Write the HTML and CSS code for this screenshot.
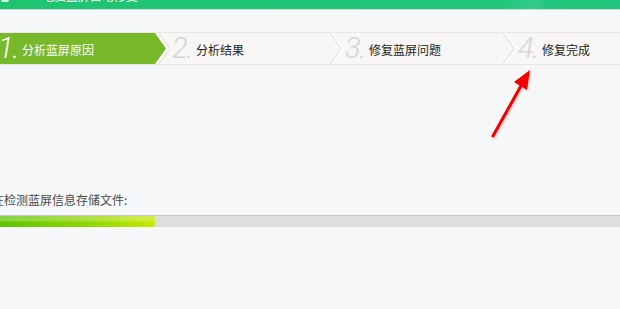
FILE: index.html
```html
<!DOCTYPE html>
<html lang="zh-CN">
<head>
    <meta charset="UTF-8">
    <title>蓝屏修复</title>
    <link rel="stylesheet" href="styles.css">
</head>
<body>
    <div class="window">
        <div class="titlebar">
            <span class="title-icon"></span>
            <span class="title-text">— 电脑蓝屏自动修复</span>
        </div>

        <div class="steps">
            <div class="step step-active">
                <div class="step-main">
                    <span class="step-num">1.</span>
                    <span class="step-label">分析蓝屏原因</span>
                </div>
                <svg class="step-sep" width="18" height="31" viewBox="0 0 18 31">
                    <polygon points="0,0 1,0 12,15.5 1,31 0,31" fill="#78b92b"/>
                    <polyline points="3,0 14,15.5 3,31" fill="none" stroke="#ffffff" stroke-width="1.5"/>
                    <polyline points="5,0 16,15.5 5,31" fill="none" stroke="#dcdcdc" stroke-width="1"/>
                </svg>
            </div>
            <div class="step">
                <div class="step-main">
                    <span class="step-num">2.</span>
                    <span class="step-label">分析结果</span>
                </div>
                <svg class="step-sep" width="18" height="31" viewBox="0 0 18 31">
                    <polyline points="3,0 14,15.5 3,31" fill="none" stroke="#dcdcdc" stroke-width="1"/>
                    <polyline points="5,0 16,15.5 5,31" fill="none" stroke="#ffffff" stroke-width="1.5"/>
                </svg>
            </div>
            <div class="step">
                <div class="step-main">
                    <span class="step-num">3.</span>
                    <span class="step-label">修复蓝屏问题</span>
                </div>
                <svg class="step-sep" width="18" height="31" viewBox="0 0 18 31">
                    <polyline points="3,0 14,15.5 3,31" fill="none" stroke="#dcdcdc" stroke-width="1"/>
                    <polyline points="5,0 16,15.5 5,31" fill="none" stroke="#ffffff" stroke-width="1.5"/>
                </svg>
            </div>
            <div class="step step-last">
                <div class="step-main">
                    <span class="step-num">4.</span>
                    <span class="step-label">修复完成</span>
                </div>
            </div>
        </div>

        <div class="progress-area">
            <div class="progress-label">正在检测蓝屏信息存储文件:</div>
            <div class="progress-track">
                <div class="progress-fill" style="width: 157px;"></div>
            </div>
        </div>

        <!-- red annotation arrow pointing at step 4 -->
        <svg class="annot-arrow" width="60" height="80" viewBox="480 62 60 80">
            <defs>
                <filter id="shadow" x="-20%" y="-20%" width="140%" height="140%">
                    <feDropShadow dx="1" dy="1" stdDeviation="1" flood-color="#000" flood-opacity="0.25"/>
                </filter>
            </defs>
            <g filter="url(#shadow)">
                <line x1="493" y1="136" x2="522" y2="84" stroke="#f20000" stroke-width="3" stroke-linecap="round"/>
                <polygon points="530,70 514,82 527,90" fill="#f20000"/>
            </g>
        </svg>
    </div>
</body>
</html>
```

FILE: styles.css
```css
body {
    margin: 0;
    background: #f6f7f9;
    font-family: "Noto Sans CJK SC", "Liberation Sans", sans-serif;
    overflow: hidden;
}

.window {
    position: relative;
    width: 620px;
    height: 309px;
}

.titlebar {
    height: 9px;
    overflow: hidden;
    background: linear-gradient(100deg, #1ec46f 0%, #1fc57a 80%, #33cc8a 86%, #22c77e 88%, #20c67d 100%);
    border-bottom: 1px solid #d3dcd8;
    display: flex;
    align-items: flex-end;
    color: #fff;
    font-size: 12px;
    line-height: 14px;
}

.title-icon {
    width: 8px;
    height: 14px;
    margin-left: 1px;
    margin-bottom: 7px;
    background: #d9f7e6;
    border-radius: 2px;
}

.title-text {
    margin-left: 18px;
    margin-bottom: 6px;
    white-space: nowrap;
}

.steps {
    display: flex;
    margin-top: 22px;
    margin-left: -1px;
    height: 31px;
    background: #f8f7f5;
    border-top: 1px solid #e8e8e8;
    border-bottom: 1px solid #e4e4e4;
}

.step {
    display: flex;
    width: 173px;
    flex-shrink: 0;
}

.step-last {
    flex: 1;
}

.step-main {
    flex: 1;
    display: flex;
    align-items: center;
    padding-left: 1px;
}

.step-active .step-main {
    background: #78b92b;
    padding-left: 0;
}

.step-sep {
    display: block;
    flex-shrink: 0;
}

.step-num {
    font-family: Roboto, "Liberation Sans", sans-serif;
    font-style: italic;
    font-weight: 300;
    font-size: 29px;
    line-height: 31px;
    letter-spacing: -1px;
    color: #d4d4d4;
    width: 24px;
    margin-left: -1px;
}

.step-label {
    font-size: 12px;
    color: #1e1e1e;
    margin-top: 1px;
}

.step-active .step-num,
.step-active .step-label {
    color: #fff;
}

.progress-area {
    margin-top: 127px;
}

.progress-label {
    font-size: 12px;
    line-height: 16px;
    color: #4a4a4a;
    margin-left: -20px;
    white-space: nowrap;
}

.progress-track {
    margin-top: 7px;
    height: 11px;
    background: #dedede;
    border-top: 1px solid #c6c6c6;
}

.progress-fill {
    height: 11px;
    margin-left: -2px;
    border-radius: 0 2px 2px 0;
    background: linear-gradient(180deg, rgba(255,255,255,0.25) 0%, rgba(255,255,255,0.25) 45%, rgba(255,255,255,0) 55%),
                linear-gradient(90deg, #5cc400 0%, #8fd500 55%, #c6e800 100%);
}

.annot-arrow {
    position: absolute;
    left: 480px;
    top: 62px;
}
```
